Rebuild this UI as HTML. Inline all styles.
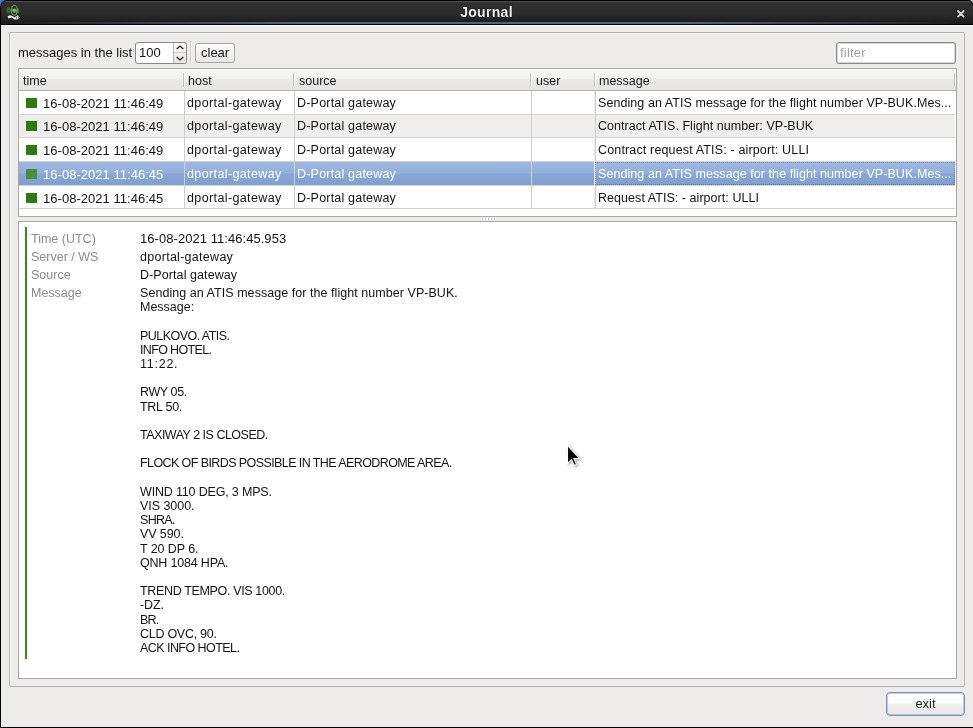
<!DOCTYPE html>
<html><head><meta charset="utf-8">
<style>
*{margin:0;padding:0;box-sizing:border-box}
html,body{width:973px;height:728px;overflow:hidden;background:#000}
body{position:relative;font-family:"Liberation Sans",sans-serif;font-size:12.5px;color:#141414}
.a{position:absolute}
.c,.ht,.dl,.dv,.lbl,#ttext,#exit{will-change:transform}
#corner{left:0;top:0;width:7px;height:7px;background:#4b7dbd}
#title{left:0;top:0;width:973px;height:25px;background:#000;border-top-left-radius:7px}
#tbar{left:1px;top:1px;width:972px;height:23px;border-top-left-radius:6px;background:linear-gradient(#5c5c5c 0px,#3a3a3a 1px,#2f2f2f 2px,#2d2d2d 12px,#1f1f1f 20px,#1b1b1b 23px)}
#tblue{left:0;top:22px;width:973px;height:2px;background:linear-gradient(90deg,rgba(80,101,133,0) 0px,rgba(80,101,133,0.4) 120px,#506585 300px,#506585 680px,rgba(80,101,133,0.4) 860px,rgba(80,101,133,0) 960px)}
#ttext{left:0;width:973px;top:4px;text-align:center;color:#f0f0f0;font-weight:bold;font-size:14px;letter-spacing:0.3px;text-shadow:0 0 2px #000}
#body{left:1px;top:25px;width:972px;height:702px;background:#edeceb;border-top:1px solid #fbfbfa}
#group{left:9px;top:32px;width:956px;height:655px;border:1px solid #b7b4b0;border-radius:2px;box-shadow:inset 1px 1px 0 #f7f7f6}
.lbl{white-space:nowrap}
#spin{left:135px;top:42px;width:52px;height:22px;background:#fff;border:1px solid #8c8985;border-radius:3px}
#spinbtn{left:173px;top:43px;width:13px;height:20px;background:linear-gradient(#f8f8f7,#e6e5e3);border-left:1px solid #b9b6b2;border-radius:0 2px 2px 0}
#sep{left:190px;top:41px;width:1px;height:23px;background:#d2d0cd;box-shadow:1px 0 0 #fafaf9}
#clear{left:195px;top:43px;width:40px;height:20px;background:linear-gradient(#fdfdfd,#e9e8e6);border:1px solid #a8a4a0;border-radius:3px}
#filter{left:836px;top:42px;width:120px;height:22px;background:#fff;border:1px solid #8c8985;border-radius:3px;box-shadow:inset 0 0 0 1px #d8d6d3}
#table{left:18px;top:68px;width:939px;height:149px;background:#fff;border:1px solid #aaa7a3}
#hdr{left:19px;top:69px;width:937px;height:22px;background:linear-gradient(#fdfdfd 0px,#f7f7f6 1px,#f3f3f2 9px,#e9e8e7 11px,#e5e4e3 21px);border-bottom:1px solid #b5b2ae}
.hs{position:absolute;top:4px;width:1px;height:14px;background:#c4c1bd;box-shadow:1px 0 0 #fbfbfb}
.ht{position:absolute;top:5px;white-space:nowrap;color:#1a1a1a}
.row{position:absolute;left:19px;width:936px;border-bottom:1px solid #d6d4d1}
.row.alt{background:#efeeed}
.row.sel{background:linear-gradient(#9db7e0 0%,#93afdb 48%,#89a7d6 52%,#7e9fcf 100%);color:#fff;border-bottom-color:#d8d4cf}
.vg{position:absolute;top:91px;width:1px;height:118px;background:#d0cecb}
.c{position:absolute;white-space:nowrap}
.sq{position:absolute;left:7px;width:11px;height:10px;background:#2b7b10}
.sel .sq{background:#4b8d3f}
#splitdots{left:481px;top:218px;width:15px;height:2px;background:repeating-linear-gradient(90deg,#ffffff 0 1px,#c9c6c2 1px 2px,#ededeb 2px 3px)}
#details{left:18px;top:221px;width:939px;height:458px;background:#fff;border:1px solid #aaa7a3}
#gbar{left:25px;top:227px;width:2px;height:432px;background:#358a22}
.dl{position:absolute;left:31px;color:#8c8c8c;white-space:nowrap}
.dv{position:absolute;left:140px;color:#141414;white-space:pre;line-height:14.2px}
#exit{left:886px;top:692px;width:79px;height:24px;background:linear-gradient(#ffffff 0,#fbfbfb 45%,#f0efee 55%,#e9e8e6 100%);border:1px solid #7894be;box-shadow:inset 0 0 0 1px rgba(120,148,190,0.45);border-radius:4px;text-align:center;line-height:21px;font-size:13px;color:#222}
</style></head><body>
<div id="corner" class="a"></div>
<div id="title" class="a"></div>
<div id="tbar" class="a"></div>
<div id="tblue" class="a"></div>
<svg class="a" style="left:5px;top:3px" width="18" height="18" viewBox="0 0 18 18">
 <ellipse cx="3.6" cy="7.2" rx="2" ry="3.3" fill="#2f7a22" opacity="0.85"/>
 <ellipse cx="12.6" cy="7.8" rx="1.7" ry="2.6" fill="#248f14" opacity="0.9"/>
 <ellipse cx="9.3" cy="7.2" rx="3" ry="5" fill="none" stroke="#8f8f8f" stroke-width="1.1"/>
 <circle cx="9.4" cy="7.6" r="2.2" fill="#3fbf22"/>
 <circle cx="8.9" cy="7" r="0.9" fill="#8be07a"/>
 <path d="M2.6 13.6 L4.6 12.3 L6.6 12.8 L9.6 14.3 L13 12.2 L14.6 14.8 L12.4 16.6 L9.6 16.4 L6.6 14.6 L3.4 15.6 Z" fill="#f4f4f4"/>
 <path d="M11.2 13.5 L11.9 16.3 M13 12.8 L13.6 15.6" stroke="#555" stroke-width="0.7"/>
</svg>
<div id="ttext" class="a">Journal</div>
<div class="a" style="left:969px;top:0;width:4px;height:4px;background:linear-gradient(45deg,transparent 0,transparent 45%,#000 46%,#000 62%,#bdbbb9 63%)"></div>
<svg class="a" style="left:955px;top:7.9px" width="12" height="12" viewBox="0 0 12 12">
 <path d="M3 3 L8.6 8.6 M8.6 3 L3 8.6" stroke="#0a0a0a" stroke-width="3.6" stroke-linecap="round" opacity="0.75"/>
 <path d="M3 3 L8.6 8.6 M8.6 3 L3 8.6" stroke="#d2d2d2" stroke-width="2" stroke-linecap="round"/>
</svg>

<div id="body" class="a"></div>
<div id="group" class="a"></div>
<div class="a lbl" style="left:18px;top:45px;font-size:13px">messages in the list</div>
<div id="spin" class="a"></div>
<div class="a lbl" style="left:139px;top:45px;font-size:13px">100</div>
<div id="spinbtn" class="a"></div>
<svg class="a" style="left:173px;top:43px" width="14" height="20" viewBox="0 0 14 20">
 <path d="M3.7 6 L7 3.1 L10.3 6" fill="none" stroke="#1a1a1a" stroke-width="1.25"/>
 <path d="M1 9.5 H13" stroke="#cfccc8" stroke-width="1"/>
 <path d="M3.7 14 L7 16.9 L10.3 14" fill="none" stroke="#1a1a1a" stroke-width="1.25"/>
</svg>
<div id="sep" class="a"></div>
<div id="clear" class="a"><div class="a lbl" style="left:5px;top:1px;font-size:13px">clear</div></div>
<div id="filter" class="a"><div class="a lbl" style="left:3px;top:2px;font-size:13px;color:#a3a3a3;letter-spacing:0.2px">filter</div></div>
<div id="table" class="a"></div>
<div id="hdr" class="a">
 <div class="ht" style="left:4px">time</div>
 <div class="hs" style="left:164px"></div>
 <div class="ht" style="left:169px">host</div>
 <div class="hs" style="left:274px"></div>
 <div class="ht" style="left:280px">source</div>
 <div class="hs" style="left:511px"></div>
 <div class="ht" style="left:517px">user</div>
 <div class="hs" style="left:575px"></div>
 <div class="ht" style="left:580px">message</div>
 <div class="hs" style="left:935px"></div>
</div>
<div class="row " style="top:91px;height:24px"><div class="sq" style="top:7px"></div><div class="c" style="left:24px;top:5px;font-size:13px;letter-spacing:0.03px">16-08-2021 11:46:49</div><div class="c" style="left:168px;top:5px;letter-spacing:0.38px">dportal-gateway</div><div class="c" style="left:278px;top:5px;letter-spacing:0.2px">D-Portal gateway</div><div class="c" style="left:579px;top:5px;letter-spacing:0.07px">Sending an ATIS message for the flight number VP-BUK.Mes...</div></div>
<div class="row alt" style="top:115px;height:23px"><div class="sq" style="top:6px"></div><div class="c" style="left:24px;top:4px;font-size:13px;letter-spacing:0.03px">16-08-2021 11:46:49</div><div class="c" style="left:168px;top:4px;letter-spacing:0.38px">dportal-gateway</div><div class="c" style="left:278px;top:4px;letter-spacing:0.2px">D-Portal gateway</div><div class="c" style="left:579px;top:4px;letter-spacing:0.04px">Contract ATIS. Flight number: VP-BUK</div></div>
<div class="row " style="top:138px;height:24px"><div class="sq" style="top:7px"></div><div class="c" style="left:24px;top:5px;font-size:13px;letter-spacing:0.03px">16-08-2021 11:46:49</div><div class="c" style="left:168px;top:5px;letter-spacing:0.38px">dportal-gateway</div><div class="c" style="left:278px;top:5px;letter-spacing:0.2px">D-Portal gateway</div><div class="c" style="left:579px;top:5px;letter-spacing:0.15px">Contract request ATIS: - airport: ULLI</div></div>
<div class="row sel" style="top:162px;height:24px"><div class="sq" style="top:7px"></div><div class="c" style="left:24px;top:5px;font-size:13px;letter-spacing:0.03px">16-08-2021 11:46:45</div><div class="c" style="left:168px;top:5px;letter-spacing:0.38px">dportal-gateway</div><div class="c" style="left:278px;top:5px;letter-spacing:0.2px">D-Portal gateway</div><div class="c" style="left:579px;top:5px;letter-spacing:0.07px">Sending an ATIS message for the flight number VP-BUK.Mes...</div></div>
<div class="row " style="top:186px;height:23px"><div class="sq" style="top:7px"></div><div class="c" style="left:24px;top:5px;font-size:13px;letter-spacing:0.03px">16-08-2021 11:46:45</div><div class="c" style="left:168px;top:5px;letter-spacing:0.38px">dportal-gateway</div><div class="c" style="left:278px;top:5px;letter-spacing:0.2px">D-Portal gateway</div><div class="c" style="left:579px;top:5px;letter-spacing:0.05px">Request ATIS: - airport: ULLI</div></div>
<div class="vg" style="left:184px"></div>
<div class="vg" style="left:294px"></div>
<div class="vg" style="left:531px"></div>
<div class="vg" style="left:594px;background:#ebeae8"></div><div class="vg" style="left:595px"></div>
<div class="a" style="left:595px;top:162px;width:360px;height:1px;background:repeating-linear-gradient(90deg,rgba(60,60,60,0.38) 0 1px,transparent 1px 2px)"></div>
<div class="a" style="left:595px;top:184px;width:360px;height:1px;background:repeating-linear-gradient(90deg,rgba(60,60,60,0.38) 0 1px,transparent 1px 2px)"></div>
<div class="a" style="left:595px;top:162px;width:1px;height:23px;background:repeating-linear-gradient(180deg,rgba(60,60,60,0.38) 0 1px,transparent 1px 2px)"></div>
<div class="a" style="left:954px;top:162px;width:1px;height:23px;background:repeating-linear-gradient(180deg,rgba(60,60,60,0.38) 0 1px,transparent 1px 2px)"></div>
<div id="splitdots" class="a"></div>
<div id="details" class="a"></div>
<div id="gbar" class="a"></div>
<div class="dl" style="top:232px">Time (UTC)</div>
<div class="dl" style="top:250px">Server / WS</div>
<div class="dl" style="top:268px">Source</div>
<div class="dl" style="top:286px">Message</div>
<div class="dv" style="top:232px;font-size:13px;letter-spacing:0.05px">16-08-2021 11:46:45.953</div>
<div class="dv" style="top:250px;letter-spacing:0.28px">dportal-gateway</div>
<div class="dv" style="top:268px;letter-spacing:0.08px">D-Portal gateway</div>
<div class="dv" style="top:286px"><span style="letter-spacing:0.05px">Sending an ATIS message for the flight number VP-BUK.</span><br><span style="letter-spacing:0.00px">Message:</span><br><br><span style="letter-spacing:-0.54px">PULKOVO. ATIS.</span><br><span style="letter-spacing:-0.65px">INFO HOTEL.</span><br><span style="letter-spacing:0.75px">11:22.</span><br><br><span style="letter-spacing:-0.39px">RWY 05.</span><br><span style="letter-spacing:-0.29px">TRL 50.</span><br><br><span style="letter-spacing:-0.50px">TAXIWAY 2 IS CLOSED.</span><br><br><span style="letter-spacing:-0.59px">FLOCK OF BIRDS POSSIBLE IN THE AERODROME AREA.</span><br><br><span style="letter-spacing:-0.17px">WIND 110 DEG, 3 MPS.</span><br><span style="letter-spacing:-0.04px">VIS 3000.</span><br><span style="letter-spacing:-0.70px">SHRA.</span><br><span style="letter-spacing:-0.10px">VV 590.</span><br><span style="letter-spacing:-0.09px">T 20 DP 6.</span><br><span style="letter-spacing:-0.19px">QNH 1084 HPA.</span><br><br><span style="letter-spacing:-0.35px">TREND TEMPO. VIS 1000.</span><br><span style="letter-spacing:-0.10px">-DZ.</span><br><span style="letter-spacing:-0.80px">BR.</span><br><span style="letter-spacing:-0.27px">CLD OVC, 90.</span><br><span style="letter-spacing:-0.55px">ACK INFO HOTEL.</span><br></div>
<div id="exit" class="a">exit</div>
<svg class="a" style="left:562px;top:441px" width="24" height="30" viewBox="0 0 24 30">
 <path d="M5.5 4.5 L5.5 22.5 L9.5 18.6 L12.3 24.6 L14.6 23.6 L11.9 17.6 L17.6 17.6 Z" fill="#000" stroke="#fff" stroke-width="1.1" stroke-linejoin="miter" style="filter:drop-shadow(1px 1px 1px rgba(0,0,0,0.4))"/>
</svg>
</body></html>
